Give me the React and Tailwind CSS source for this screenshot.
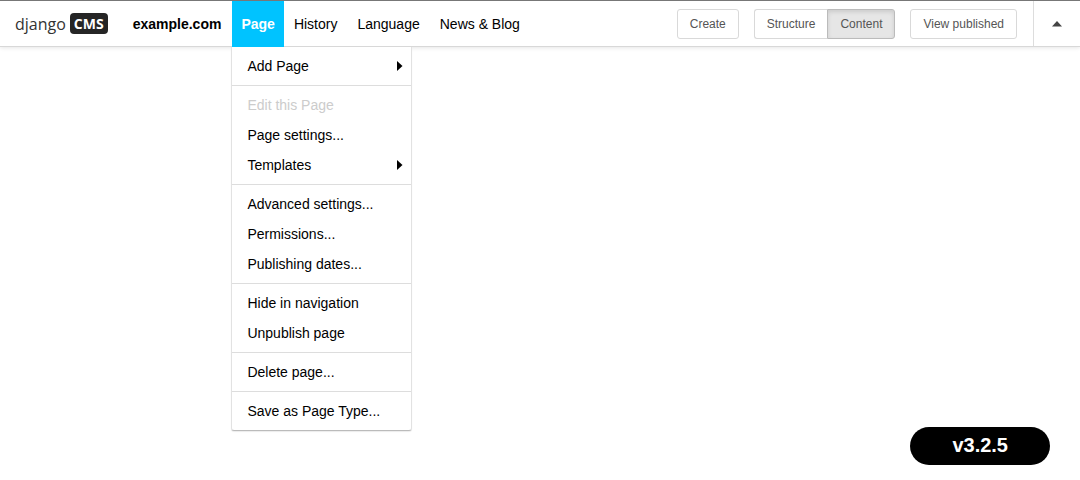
import { useState } from "react";

function classNames(...classes) {
  return classes.filter(Boolean).join(" ");
}

const navItems = ["History", "Language", "News & Blog"];

const menuGroups = [
  [{ label: "Add Page", submenu: true }],
  [
    { label: "Edit this Page", disabled: true },
    { label: "Page settings..." },
    { label: "Templates", submenu: true },
  ],
  [
    { label: "Advanced settings..." },
    { label: "Permissions..." },
    { label: "Publishing dates..." },
  ],
  [{ label: "Hide in navigation" }, { label: "Unpublish page" }],
  [{ label: "Delete page..." }],
  [{ label: "Save as Page Type..." }],
];

function Logo() {
  return (
    <a
      href="#home"
      className="flex items-center gap-1 font-['Open_Sans',sans-serif] text-base text-[#333]"
    >
      <span className="leading-5">django</span>
      <span className="rounded-sm bg-[#252525] px-1 text-sm leading-[21px] font-bold text-white">
        CMS
      </span>
    </a>
  );
}

function PageMenu() {
  return (
    <div className="absolute top-full -left-px mt-px w-[181px] rounded-b-[3px] border border-t-0 border-[#e2e2e2] border-b-[#bbb] bg-white shadow-[0_1px_1px_rgba(0,0,0,0.08)]">
      {menuGroups.map((group, index) => (
        <ul
          key={group[0].label}
          className={classNames("py-1", index > 0 && "border-t border-[#ddd]")}
        >
          {group.map((item) => (
            <li key={item.label}>
              <button
                type="button"
                disabled={item.disabled}
                className="flex h-[30px] w-full items-center justify-between pr-2 pl-[15px] text-left text-black disabled:text-[#ccc]"
              >
                {item.label}
                {item.submenu && (
                  <svg
                    width="6"
                    height="10"
                    viewBox="0 0 6 10"
                    aria-hidden="true"
                  >
                    <path d="M0 0L5.5 5L0 10Z" fill="#000" />
                  </svg>
                )}
              </button>
            </li>
          ))}
        </ul>
      ))}
    </div>
  );
}

function ModeButton({ active, className, children, onClick }) {
  return (
    <button
      type="button"
      aria-pressed={active}
      onClick={onClick}
      className={classNames(
        "h-[30px] border px-3 text-xs text-[#555]",
        active
          ? "border-[#bbb] bg-[#e6e6e6] shadow-[inset_0_2px_4px_rgba(0,0,0,0.12)]"
          : "border-[#d9d9d9] bg-white",
        className
      )}
    >
      {children}
    </button>
  );
}

export default function App() {
  const [open, setOpen] = useState(true);
  const [mode, setMode] = useState("content");

  return (
    <div className="min-h-screen bg-white font-['Liberation_Sans',Arial,sans-serif] text-sm text-black">
      <header className="flex h-[47px] items-stretch border-t border-b border-t-[#777] border-b-[#d8d8d8] bg-white pl-[15px] shadow-[0_1px_4px_rgba(0,0,0,0.1)]">
        <Logo />
        <nav className="ml-[15px] flex">
          <a href="#site" className="flex items-center px-[10px] font-bold">
            example.com
          </a>
          <div className="relative ml-px flex">
            <button
              type="button"
              aria-expanded={open}
              onClick={() => setOpen(!open)}
              className={classNames(
                "-mb-px px-[9px] font-bold",
                open && "bg-[#00c3ff] text-white"
              )}
            >
              Page
            </button>
            {open && <PageMenu />}
          </div>
          {navItems.map((item) => (
            <a
              key={item}
              href={`#${item}`}
              className="flex items-center px-[10px]"
            >
              {item}
            </a>
          ))}
        </nav>

        <div className="ml-auto flex items-center gap-[15px] pr-4">
          <ModeButton className="rounded-[3px]">Create</ModeButton>
          <div className="flex">
            <ModeButton
              className="rounded-l-[3px] border-r-0"
              active={mode === "structure"}
              onClick={() => setMode("structure")}
            >
              Structure
            </ModeButton>
            <ModeButton
              className="rounded-r-[3px]"
              active={mode === "content"}
              onClick={() => setMode("content")}
            >
              Content
            </ModeButton>
          </div>
          <ModeButton className="rounded-[3px]">View published</ModeButton>
        </div>
        <button
          type="button"
          aria-label="Toggle toolbar"
          className="flex w-[47px] items-center justify-center border-l border-[#ddd]"
        >
          <svg width="10" height="6" viewBox="0 0 10 6" aria-hidden="true">
            <path d="M0 5.5L5 0L10 5.5Z" fill="#444" />
          </svg>
        </button>
      </header>

      <div className="fixed right-[30px] bottom-[15px] rounded-full bg-black px-[42px] pt-1 pb-[6px] text-xl font-bold text-white">
        v3.2.5
      </div>
    </div>
  );
}
